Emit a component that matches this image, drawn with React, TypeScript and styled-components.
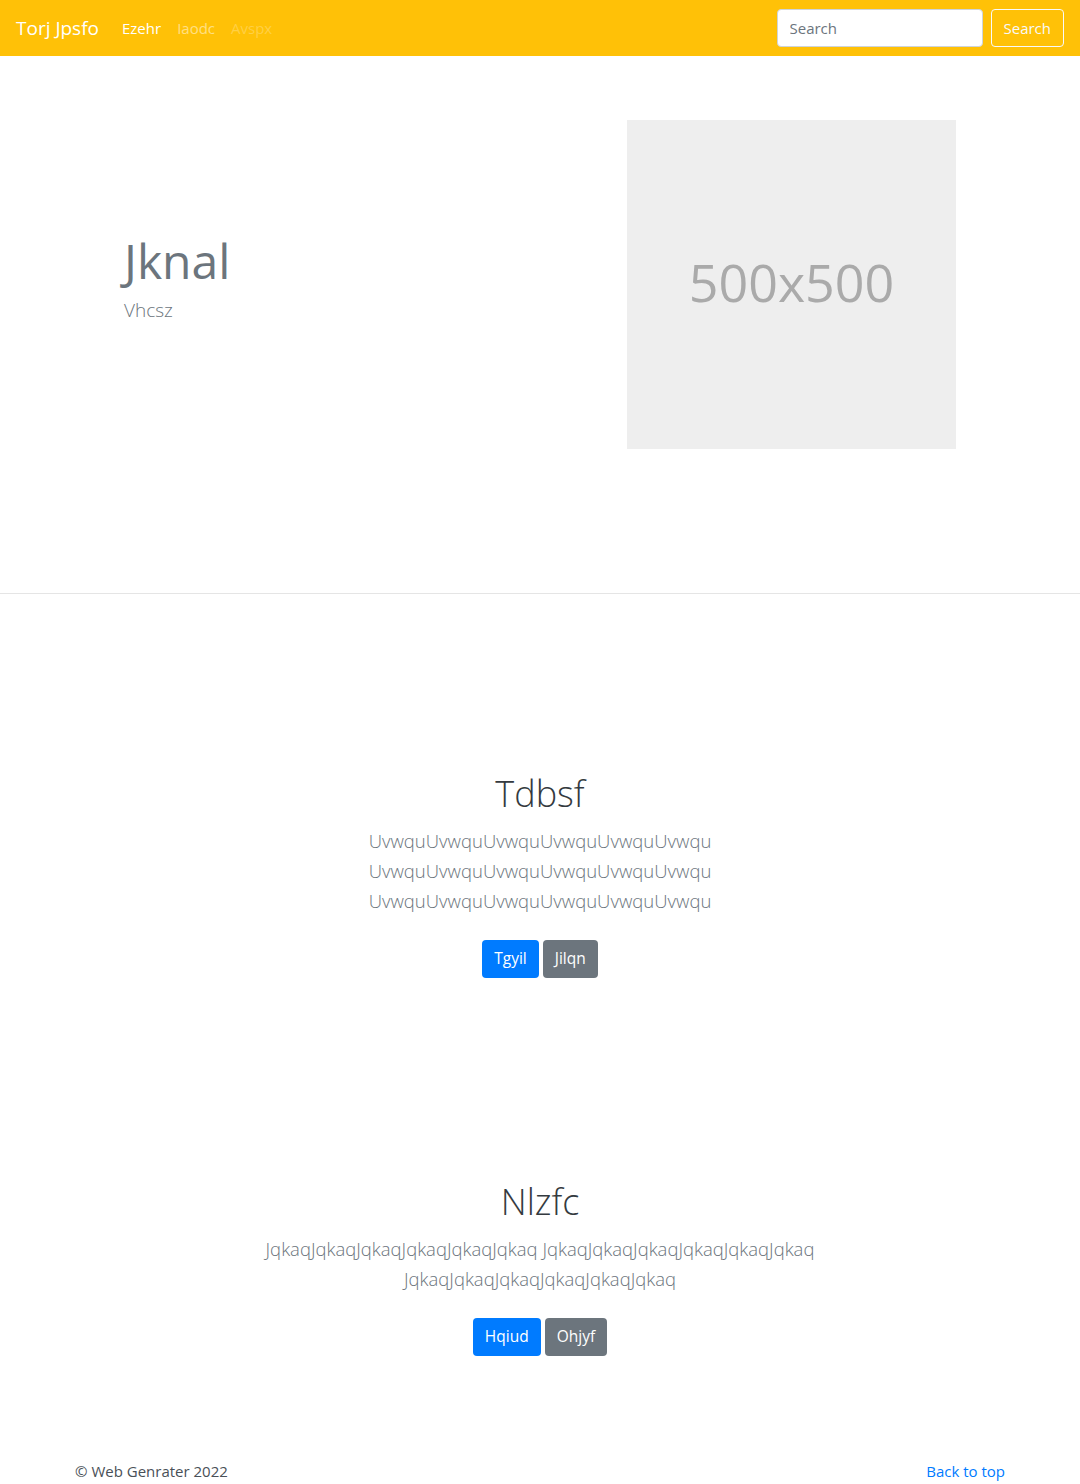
import React from "react";
import styled, { createGlobalStyle } from "styled-components";

const GlobalStyle = createGlobalStyle`
  * { box-sizing: border-box; }
  html, body { margin: 0; padding: 0; }
  body {
    font-family: "Open Sans", "Noto Sans", sans-serif;
    font-size: 16px;
    line-height: 1.5;
    color: #212529;
    background: #fff;
  }
`;

const Navbar = styled.nav`
  height: 56px;
  background: #ffc107;
  display: flex;
  align-items: center;
  padding: 0 16px;
`;

const Brand = styled.a`
  font-size: 19px;
  color: #fff;
  margin-right: 15px;
  text-decoration: none;
  line-height: 1.5;
`;

const NavList = styled.ul`
  list-style: none;
  margin: 0;
  padding: 0;
  display: flex;
  flex: 1;
`;

const NavLink = styled.a<{ $state: "active" | "normal" | "disabled" }>`
  display: block;
  padding: 8px;
  font-size: 15px;
  text-decoration: none;
  color: ${(p) =>
    p.$state === "active"
      ? "#fff"
      : p.$state === "normal"
      ? "rgba(255,255,255,0.5)"
      : "rgba(255,255,255,0.25)"};
`;

const SearchForm = styled.form`
  display: flex;
  align-items: center;
  gap: 8px;
`;

const SearchInput = styled.input`
  width: 206px;
  height: 38px;
  padding: 6px 12px;
  font-family: inherit;
  font-size: 15px;
  color: #495057;
  border: 1px solid #ced4da;
  border-radius: 4px;
  background: #fff;
  &::placeholder { color: #6c757d; }
`;

const OutlineButton = styled.button`
  height: 38px;
  padding: 6px 12px;
  font-family: inherit;
  font-size: 15px;
  color: #f8f9fa;
  background: transparent;
  border: 1px solid #f8f9fa;
  border-radius: 4px;
`;

const Hero = styled.section`
  border-bottom: 1px solid #e5e5e5;
  padding: 64px 0 144px;
`;

const HeroInner = styled.div`
  width: 960px;
  margin: 0 auto;
  display: grid;
  grid-template-columns: 1fr 1fr;
  align-items: center;
`;

const HeroText = styled.div`
  padding-left: 64px;
  padding-bottom: 12px;
`;

const HeroTitle = styled.h1`
  margin: 0 0 6px;
  font-size: 48px;
  font-weight: 400;
  line-height: 1.2;
  color: #6c757d;
`;

const HeroLead = styled.p`
  margin: 0;
  font-size: 19px;
  font-weight: 300;
  color: #6c757d;
`;

const Placeholder = styled.div`
  width: 329px;
  height: 329px;
  margin-left: 87px;
  background: #eeeeee;
  color: #aaaaaa;
  font-size: 52px;
  display: flex;
  align-items: center;
  justify-content: center;
  padding-bottom: 6px;
`;

const Main = styled.main`
  padding-top: 76px;
`;

const Feature = styled.section`
  padding: 100px 0;
  text-align: center;
`;

const FeatureCol = styled.div`
  width: 610px;
  margin: 0 auto;
`;

const FeatureTitle = styled.h2`
  margin: 0 0 8px;
  font-size: 36px;
  font-weight: 300;
  line-height: 48px;
  color: #343a40;
`;

const Lead = styled.p`
  margin: 0 0 24px;
  font-size: 18.5px;
  font-weight: 300;
  line-height: 30px;
  color: #6c757d;
`;

const ButtonRow = styled.p`
  margin: 0;
  display: flex;
  justify-content: center;
  gap: 4px;
`;

const Button = styled.a<{ $variant: "primary" | "secondary" }>`
  display: inline-block;
  height: 38px;
  padding: 6px 12px;
  font-size: 15.5px;
  line-height: 24px;
  color: #fff;
  border-radius: 4px;
  text-decoration: none;
  background: ${(p) => (p.$variant === "primary" ? "#007bff" : "#6c757d")};
`;

const Footer = styled.footer`
  width: 960px;
  margin: 0 auto;
  padding: 4px 15px 0;
  display: flex;
  justify-content: space-between;
  font-size: 15px;
`;

const FooterText = styled.p`
  margin: 0;
  color: #495057;
`;

const FooterLink = styled.a`
  color: #007bff;
  text-decoration: none;
`;

const features = [
  {
    title: "Tdbsf",
    lines: [
      "UvwquUvwquUvwquUvwquUvwquUvwqu",
      "UvwquUvwquUvwquUvwquUvwquUvwqu",
      "UvwquUvwquUvwquUvwquUvwquUvwqu",
    ],
    primary: "Tgyil",
    secondary: "Jilqn",
  },
  {
    title: "Nlzfc",
    lines: [
      "JqkaqJqkaqJqkaqJqkaqJqkaqJqkaq",
      "JqkaqJqkaqJqkaqJqkaqJqkaqJqkaq",
      "JqkaqJqkaqJqkaqJqkaqJqkaqJqkaq",
    ],
    primary: "Hqiud",
    secondary: "Ohjyf",
  },
];

export default function App() {
  return (
    <>
      <GlobalStyle />
      <Navbar>
        <Brand href="#">Torj Jpsfo</Brand>
        <NavList>
          <li><NavLink $state="active" href="#">Ezehr</NavLink></li>
          <li><NavLink $state="normal" href="#">Iaodc</NavLink></li>
          <li><NavLink $state="disabled" href="#">Avspx</NavLink></li>
        </NavList>
        <SearchForm onSubmit={(e) => e.preventDefault()}>
          <SearchInput type="search" placeholder="Search" aria-label="Search" />
          <OutlineButton type="submit">Search</OutlineButton>
        </SearchForm>
      </Navbar>
      <Hero>
        <HeroInner>
          <HeroText>
            <HeroTitle>Jknal</HeroTitle>
            <HeroLead>Vhcsz</HeroLead>
          </HeroText>
          <div>
            <Placeholder>500x500</Placeholder>
          </div>
        </HeroInner>
      </Hero>
      <Main>
        {features.map((f) => (
          <Feature key={f.title}>
            <FeatureCol>
              <FeatureTitle>{f.title}</FeatureTitle>
              <Lead>{f.lines.join(" ")}</Lead>
              <ButtonRow>
                <Button $variant="primary" href="#">{f.primary}</Button>
                <Button $variant="secondary" href="#">{f.secondary}</Button>
              </ButtonRow>
            </FeatureCol>
          </Feature>
        ))}
      </Main>
      <Footer>
        <FooterText>© Web Genrater 2022</FooterText>
        <FooterLink href="#">Back to top</FooterLink>
      </Footer>
    </>
  );
}
